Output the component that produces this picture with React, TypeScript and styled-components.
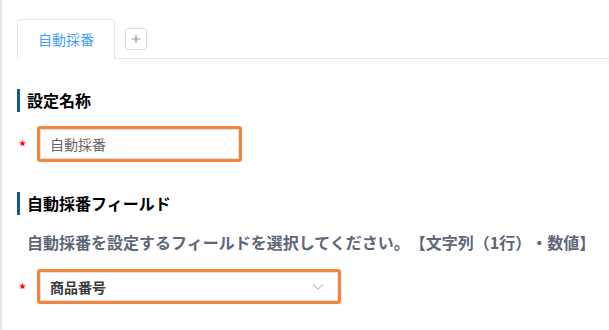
import React from "react";
import styled, { createGlobalStyle } from "styled-components";

const Global = createGlobalStyle`
  html, body { margin: 0; padding: 0; background: #ffffff; }
  body { font-family: "Noto Sans CJK JP", "Noto Sans", sans-serif; text-spacing-trim: space-all; }
`;

const Page = styled.div`
  box-sizing: border-box;
  width: 609px;
  height: 330px;
  border-left: 2px solid #e9e9eb;
  padding: 19px 0 0 15px;
  background: #fff;
  overflow: hidden;
`;

const TabBar = styled.div`
  display: flex;
  align-items: center;
  gap: 10px;
  border-bottom: 1px solid #e4e7ed;
  height: 39px;
`;

const Tab = styled.div`
  box-sizing: border-box;
  height: 40px;
  margin-bottom: -1px;
  align-self: flex-end;
  padding: 0 20px;
  display: flex;
  align-items: center;
  border: 1px solid #e4e7ed;
  border-bottom: 1px solid #fff;
  border-radius: 4px 4px 0 0;
  background: #fff;
  color: #409eff;
  font-size: 14px;
`;

const AddButton = styled.div`
  box-sizing: border-box;
  width: 22px;
  height: 22px;
  border: 1px solid #dcdfe6;
  border-radius: 3px;
  display: flex;
  align-items: center;
  justify-content: center;
`;

const Section = styled.section<{ $top: number }>`
  margin-top: ${(p) => p.$top}px;
`;

const Heading = styled.h2`
  margin: 0;
  border-left: 3px solid #0b5e95;
  padding-left: 7px;
  line-height: 23px;
  font-size: 16px;
  font-weight: 700;
  color: #000;
`;

const Description = styled.p`
  margin: 15px 0 0 10px;
  font-size: 16px;
  line-height: 24px;
  font-weight: 700;
  color: #5d6779;
  white-space: nowrap;
`;

const FieldRow = styled.div<{ $top: number }>`
  display: flex;
  align-items: center;
  margin-top: ${(p) => p.$top}px;
`;

const Required = styled.span`
  width: 20px;
  color: #f00;
  font-size: 14px;
  font-weight: 700;
  padding: 4px 0 0 2px;
  box-sizing: border-box;
  line-height: 1;
`;

const Highlight = styled.div<{ $w: number; $h: number }>`
  box-sizing: border-box;
  width: ${(p) => p.$w}px;
  height: ${(p) => p.$h}px;
  border: 3.5px solid #f5843c;
  border-radius: 3px;
  display: flex;
`;

const Inner = styled.div<{ $bold?: boolean }>`
  flex: 1;
  display: flex;
  align-items: center;
  justify-content: space-between;
  border: 1px solid #dcdfe6;
  padding: 0 13px 0 9px;
  font-size: 14px;
  color: ${(p) => (p.$bold ? "#3a3a3a" : "#666")};
  font-weight: ${(p) => (p.$bold ? 700 : 400)};
`;

const Chevron = () => (
  <svg width="12" height="8" viewBox="0 0 12 8" fill="none">
    <path d="M1 1.5 L6 6 L11 1.5" stroke="#c0c4cc" strokeWidth="1.2" />
  </svg>
);

export default function App() {
  return (
    <>
      <Global />
      <Page>
        <TabBar>
          <Tab>自動採番</Tab>
          <AddButton>
            <svg width="10" height="10" viewBox="0 0 10 10">
              <path d="M5 1v8M1 5h8" stroke="#909399" strokeWidth="1.2" />
            </svg>
          </AddButton>
        </TabBar>

        <Section $top={30}>
          <Heading>設定名称</Heading>
          <FieldRow $top={14}>
            <Required>*</Required>
            <Highlight $w={205} $h={36}>
              <Inner>自動採番</Inner>
            </Highlight>
          </FieldRow>
        </Section>

        <Section $top={30}>
          <Heading>自動採番フィールド</Heading>
          <Description>
            自動採番を設定するフィールドを選択してください。【文字列（1行）・数値】
          </Description>
          <FieldRow $top={15}>
            <Required>*</Required>
            <Highlight $w={304} $h={35}>
              <Inner $bold>
                <span>商品番号</span>
                <Chevron />
              </Inner>
            </Highlight>
          </FieldRow>
        </Section>
      </Page>
    </>
  );
}
